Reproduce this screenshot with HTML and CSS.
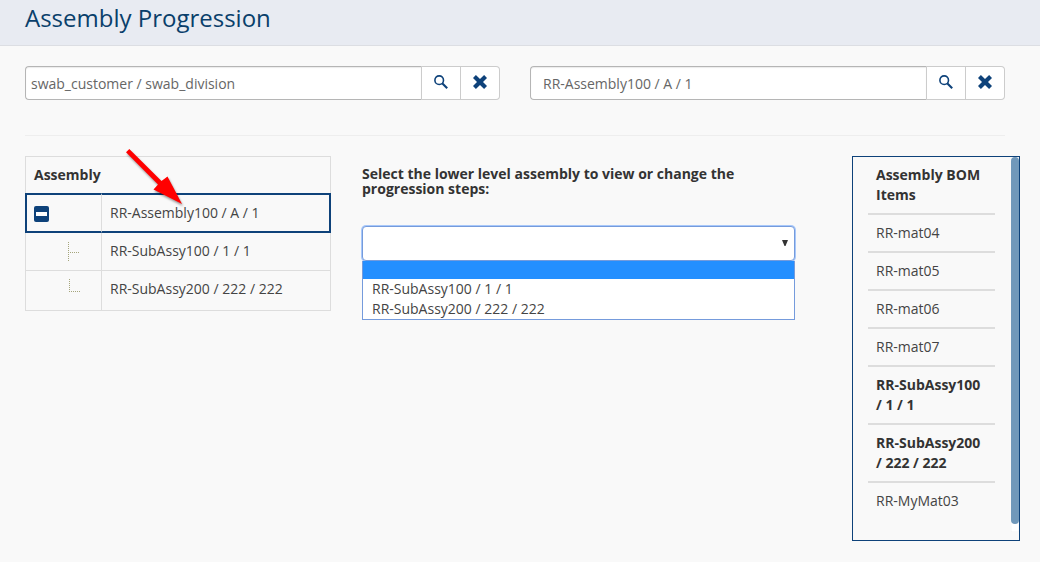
FILE: index.html
```html
<!DOCTYPE html>
<html lang="en">
<head>
<meta charset="utf-8">
<title>Assembly Progression</title>
<link rel="stylesheet" href="styles.css">
</head>
<body>
<svg class="sprite" aria-hidden="true">
  <symbol id="search" viewBox="0 0 14 14"><circle cx="5.200" cy="5.200" r="4.300" fill="none" stroke="currentColor" stroke-width="1.600"/><path d="M8.200 8.200l5 5" fill="none" stroke="currentColor" stroke-width="2.100"/></symbol>
  <symbol id="clear" viewBox="0 0 14 14"><path d="M2.900 0L7 4l4.100-4L14 2.900 10 7l4 4.100-2.900 2.900L7 10l-4.100 4L0 11.100 4 7 0 2.900z" fill="currentColor"/></symbol>
</svg>
<header class="page-header"><h1>Assembly Progression</h1></header>
<main class="content">
  <form class="filters">
    <div class="lookup">
      <input type="text" aria-label="Customer and division" value="swab_customer / swab_division">
      <button type="button" aria-label="Search customer"><svg><use href="#search"/></svg></button>
      <button type="button" aria-label="Clear customer"><svg><use href="#clear"/></svg></button>
    </div>
    <div class="lookup">
      <input class="indented" type="text" aria-label="Assembly" value="RR-Assembly100 / A / 1">
      <button type="button" aria-label="Search assembly"><svg><use href="#search"/></svg></button>
      <button type="button" aria-label="Clear assembly"><svg><use href="#clear"/></svg></button>
    </div>
  </form>
  <div class="columns">
    <section class="tree">
      <table>
        <thead><tr><th colspan="2">Assembly</th></tr></thead>
        <tbody>
          <tr class="selected"><td class="node"><button class="toggle" type="button" aria-label="Collapse"></button></td><td>RR-Assembly100 / A / 1</td></tr>
          <tr class="child"><td class="node"><svg class="branch" viewBox="0 0 14 20"><path d="M0.500 1v19M2 11.500h9"/></svg></td><td>RR-SubAssy100 / 1 / 1</td></tr>
          <tr class="last"><td class="node"><svg class="branch" viewBox="0 0 14 20"><path d="M1.500 0v13M1 12.500h11"/></svg></td><td>RR-SubAssy200 / 222 / 222</td></tr>
        </tbody>
      </table>
      <svg class="pointer" viewBox="0 0 70 64" aria-hidden="true"><path d="M6.300 4L38.500 36L44.500 31.500L59 59L30.500 44.500L35 39.500L3 7.300z"/></svg>
    </section>
    <section class="picker">
      <label for="lower">Select the lower level assembly to view or change the progression steps:</label>
      <div class="dropdown">
        <select id="lower">
          <option></option>
          <option>RR-SubAssy100 / 1 / 1</option>
          <option>RR-SubAssy200 / 222 / 222</option>
        </select>
        <svg class="caret" viewBox="0 0 6 6" aria-hidden="true"><path d="M0 0h6L3.500 6h-1z"/></svg>
        <ul class="options" role="listbox" aria-label="Lower level assembly">
          <li class="active" role="option" aria-selected="true"></li>
          <li role="option">RR-SubAssy100 / 1 / 1</li>
          <li role="option">RR-SubAssy200 / 222 / 222</li>
        </ul>
      </div>
    </section>
    <aside class="bom">
      <table>
        <thead><tr><th>Assembly BOM Items</th></tr></thead>
        <tbody>
          <tr><td>RR-mat04</td></tr>
          <tr><td>RR-mat05</td></tr>
          <tr><td>RR-mat06</td></tr>
          <tr><td>RR-mat07</td></tr>
          <tr><td class="assembly">RR-SubAssy100 / 1 / 1</td></tr>
          <tr><td class="assembly">RR-SubAssy200 / 222 / 222</td></tr>
          <tr><td>RR-MyMat03</td></tr>
        </tbody>
      </table>
      <div class="track"><div class="thumb"></div></div>
    </aside>
  </div>
</main>
</body>
</html>
```
FILE: styles.css
```css
* { box-sizing: border-box; }
body {
  margin: 0;
  background: #f9f9f9;
  color: #333;
  font: 14px/20px "Open Sans", "Noto Sans", sans-serif;
}
.sprite { position: absolute; width: 0; height: 0; }
.page-header {
  padding: 2px 25px 11px;
  background: #e8ebf2;
  border-bottom: 1px solid #dcdee3;
}
h1 {
  margin: 0;
  color: #0a3f6b;
  font-size: 24px;
  font-weight: 400;
  line-height: 32px;
}
.content { padding: 20px 20px 20px 25px; }
.filters {
  display: grid;
  grid-template-columns: 1fr 1fr;
  gap: 30px;
  margin-right: 15px;
  padding-bottom: 35px;
  border-bottom: 1px solid #eee;
}
.lookup { display: flex; height: 34px; }
.lookup input {
  flex: 1;
  min-width: 0;
  padding: 2px 5px 0;
  border: 1px solid #b5b5b5;
  border-right-color: #ccc;
  border-radius: 4px 0 0 4px;
  background: #fff;
  box-shadow: inset 0 1px 1px rgba(0, 0, 0, 0.08);
  color: #666;
  font: inherit;
}
.lookup .indented { padding-left: 12px; }
.lookup button {
  display: grid;
  place-items: center;
  width: 39px;
  padding: 0 0 3px;
  border: 1px solid #ccc;
  border-left: 0;
  background: #fff;
  color: #0e427a;
}
.lookup button:last-child { border-radius: 0 4px 4px 0; }
.lookup svg { width: 14px; height: 14px; }
.columns {
  display: grid;
  grid-template-columns: 306fr 521fr 168px;
  align-items: start;
  padding-top: 20px;
}
table { width: 100%; border-spacing: 0; }
th, td { padding: 8px; text-align: left; }
th { font-weight: 700; }
td, .options { color: #444; }
.tree { position: relative; }
.tree table { border: 1px solid #ddd; border-width: 1px 0; }
.tree th { border: 1px solid #ddd; border-width: 0 1px; }
.tree td { border: 1px solid #ddd; border-width: 0 1px 1px 0; }
.tree .node { width: 77px; border-left-width: 1px; }
.tree .child td { padding-bottom: 9px; }
.tree .last td { padding-bottom: 11px; border-bottom: 0; }
.tree .selected td { border-top: 2px solid #0e427a; border-bottom: 2px solid #0e427a; }
.tree .selected .node { padding-left: 7px; border-left: 2px solid #0e427a; }
.tree .selected td:last-child { border-right: 2px solid #0e427a; }
.toggle {
  display: grid;
  place-items: center;
  width: 15px;
  height: 16px;
  margin-top: 2px;
  padding: 0;
  border: 0;
  border-radius: 2px;
  background: #0e427a;
}
.toggle::before { content: ""; width: 11px; height: 4px; background: #fff; }
.branch { display: block; width: 14px; height: 20px; margin-left: 34px; }
.branch path { fill: none; stroke: #a5a57c; stroke-dasharray: 1 1; }
.pointer {
  position: absolute;
  top: -11px;
  left: 98px;
  width: 70px;
  height: 64px;
  filter: drop-shadow(1px 2px 1px rgba(0, 0, 0, 0.4));
}
.pointer path { fill: #f00; }
.picker { padding: 10px 57px 0 31px; }
.picker label {
  display: block;
  margin-bottom: 30px;
  font-weight: 700;
  line-height: 15px;
}
.dropdown { position: relative; }
.dropdown select {
  display: block;
  width: 100%;
  height: 35px;
  padding: 0 10px;
  border: 1px solid #759bdc;
  border-radius: 4px;
  box-shadow: 0 0 0 1px #a8c8fa;
  outline: 0;
  appearance: none;
  background: #fff;
  color: inherit;
  font: inherit;
}
.caret {
  position: absolute;
  top: 14px;
  right: 7px;
  width: 6px;
  height: 6px;
  fill: #333;
  pointer-events: none;
}
.options {
  position: absolute;
  top: 100%;
  left: 0;
  right: 0;
  margin: 0;
  padding: 0;
  border: 1px solid #759bdc;
  border-top: 0;
  background: #fff;
  list-style: none;
}
.options li { height: 20px; padding: 0 9px; }
.options .active { height: 18px; background: #248fff; }
.bom {
  display: flex;
  gap: 16px;
  padding: 0 0 8px 15px;
  border: 1px solid #0e427a;
}
.bom table { flex: 1; }
.bom tr > * { border-bottom: 2px solid #ddd; }
.bom tbody tr:last-child td { padding-bottom: 21px; border-bottom: 0; }
.bom .assembly { color: #333; font-weight: 700; }
.track { width: 8px; padding-bottom: 8px; background: #fff; box-shadow: inset 0 0 1px #ccc; }
.thumb { height: 100%; border-radius: 4px; background: #7098ba; }
```
